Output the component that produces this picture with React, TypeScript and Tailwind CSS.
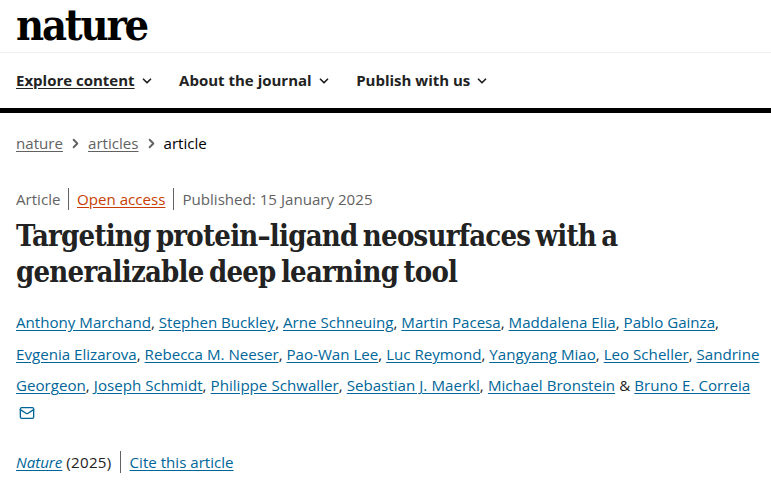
import { ChevronDown, ChevronRight, Mail } from "lucide-react";

const navItems = ["Explore content", "About the journal", "Publish with us"];

const authorLines = [
  ["Anthony Marchand", "Stephen Buckley", "Arne Schneuing", "Martin Pacesa", "Maddalena Elia", "Pablo Gainza"],
  ["Evgenia Elizarova", "Rebecca M. Neeser", "Pao-Wan Lee", "Luc Reymond", "Yangyang Miao", "Leo Scheller", "Sandrine"],
];

const App = () => {
  return (
    <div className="h-[485px] overflow-hidden bg-white font-['Open_Sans',sans-serif] text-[#222222]">
      <header className="h-[53px] overflow-hidden border-b border-[#eeeeee] pl-4">
        <div className="font-['DejaVu_Serif',serif] text-[43px] font-bold leading-[50px] tracking-[-2.2px] text-black [font-stretch:condensed]">nature</div>
      </header>

      <nav className="flex h-[55px] items-center gap-[25.5px] pl-4">
        {navItems.map((item, i) => (
          <div key={item} className="flex items-center gap-[5px]">
            <span className={`text-[15px] font-bold ${i === 0 ? "underline underline-offset-2" : ""}`}>{item}</span>
            <ChevronDown size={14} strokeWidth={3} />
          </div>
        ))}
      </nav>
      <div className="h-[5px] bg-black" />

      <div className="flex items-center pl-4 pt-[18px] text-[15.12px] leading-[24px]">
        <a className="text-[#626262] underline underline-offset-2">nature</a>
        <ChevronRight size={15} strokeWidth={3} className="mx-[5px] text-[#626262]" />
        <a className="text-[#626262] underline underline-offset-2">articles</a>
        <ChevronRight size={15} strokeWidth={3} className="mx-[5px] text-[#626262]" />
        <span className="text-black">article</span>
      </div>

      <div className="flex items-center pl-4 pt-[33px] text-[15.12px] leading-[22px] text-[#626262]">
        <span className="border-r border-[#626262] pr-[7.5px]">Article</span>
        <a className="border-r border-[#626262] px-2 text-[#c83c00]"><span className="underline underline-offset-2">Open access</span></a>
        <span className="pl-2">Published: 15 January 2025</span>
      </div>

      <h1 className="pl-4 pt-[8px] font-['DejaVu_Serif',serif] text-[29px] font-bold leading-[36px] tracking-[-0.75px] text-[#222222] [font-stretch:condensed] [word-spacing:-3px]">
        Targeting protein–ligand neosurfaces with a
        <br />
        generalizable deep learning tool
      </h1>

      <div className="pl-4 pt-[17px] text-[15.12px] leading-[31.5px] text-[#222222]">
        {authorLines.map((line, l) => (
          <div key={l}>
            {line.map((name, i) => (
              <span key={name}>
                <a className="text-[#006699] underline underline-offset-2">{name}</a>
                {i < line.length - 1 || l === 0 ? ", " : ""}
              </span>
            ))}
          </div>
        ))}
        <div className="[word-spacing:0.2px]">
          <a className="text-[#006699] underline underline-offset-2">Georgeon</a>,{" "}
          <a className="text-[#006699] underline underline-offset-2">Joseph Schmidt</a>,{" "}
          <a className="text-[#006699] underline underline-offset-2">Philippe Schwaller</a>,{" "}
          <a className="text-[#006699] underline underline-offset-2">Sebastian J. Maerkl</a>,{" "}
          <a className="text-[#006699] underline underline-offset-2">Michael Bronstein</a> &amp;{" "}
          <a className="text-[#006699] underline underline-offset-2">Bruno E. Correia</a>
        </div>
        <div className="flex h-[22px] items-center pl-[3px]">
          <Mail size={16} strokeWidth={2} className="text-[#006699]" />
        </div>
      </div>

      <div className="flex items-center pl-4 pt-[27px] text-[15.12px] leading-[22px]">
        <span className="border-r border-[#626262] pr-2">
          <a className="italic text-[#006699] underline underline-offset-2">Nature</a>{" "}
          <span className="tracking-[0.3px]">(2025)</span>
        </span>
        <a className="pl-[9px] text-[#006699] underline underline-offset-2">Cite this article</a>
      </div>
    </div>
  );
};

export default App;
